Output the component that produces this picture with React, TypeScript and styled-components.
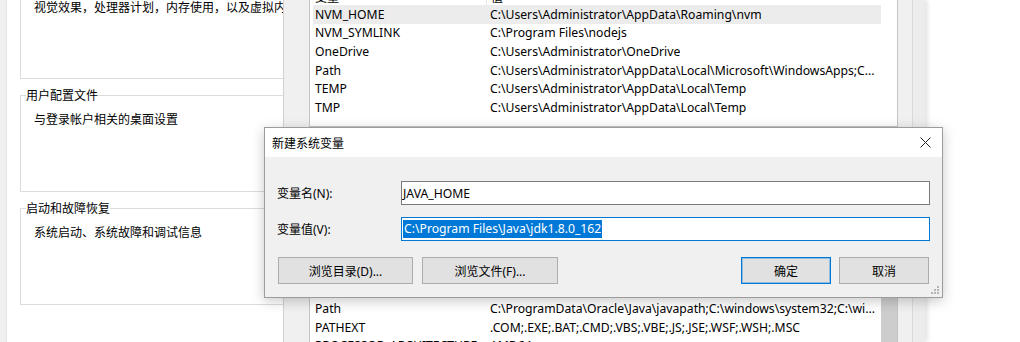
import styled, { createGlobalStyle } from "styled-components";

interface EnvVar {
  name: string;
  value: string;
  selected?: boolean;
}

const userVars: EnvVar[] = [
  { name: "NVM_HOME", value: "C:\\Users\\Administrator\\AppData\\Roaming\\nvm", selected: true },
  { name: "NVM_SYMLINK", value: "C:\\Program Files\\nodejs" },
  { name: "OneDrive", value: "C:\\Users\\Administrator\\OneDrive" },
  { name: "Path", value: "C:\\Users\\Administrator\\AppData\\Local\\Microsoft\\WindowsApps;C..." },
  { name: "TEMP", value: "C:\\Users\\Administrator\\AppData\\Local\\Temp" },
  { name: "TMP", value: "C:\\Users\\Administrator\\AppData\\Local\\Temp" },
];

const systemVars: EnvVar[] = [
  { name: "NUMBER_OF_PROCESSORS", value: "4" },
  { name: "OS", value: "Windows_NT" },
  { name: "Path", value: "C:\\ProgramData\\Oracle\\Java\\javapath;C:\\windows\\system32;C:\\wi..." },
  { name: "PATHEXT", value: ".COM;.EXE;.BAT;.CMD;.VBS;.VBE;.JS;.JSE;.WSF;.WSH;.MSC" },
  { name: "PROCESSOR_ARCHITECTURE", value: "AMD64" },
  { name: "PROCESSOR_IDENTIFIER", value: "Intel64 Family 6 Model 58 Stepping 9, GenuineIntel" },
];

const groups = [
  { title: "性能", text: "视觉效果，处理器计划，内存使用，以及虚拟内存" },
  { title: "用户配置文件", text: "与登录帐户相关的桌面设置" },
  { title: "启动和故障恢复", text: "系统启动、系统故障和调试信息" },
];

const App = () => {
  return (
    <Screen>
      <GlobalStyle />
      <SystemProps>
        <EdgeStrip />
        <TabPage>
          {groups.map((g, idx) => (
            <GroupBox key={g.title} $first={idx === 0}>
              <GroupTitle>{g.title}</GroupTitle>
              <GroupText>{g.text}</GroupText>
            </GroupBox>
          ))}
        </TabPage>
      </SystemProps>

      <EnvWindow>
        <ListColumn>
          <ListBox $top={-20} $height={147}>
            <ListMain>
              <ListHeader>
                <HeaderCell $name>变量</HeaderCell>
                <HeaderCell>值</HeaderCell>
              </ListHeader>
              {userVars.map((v) => (
                <Row key={v.name} $selected={v.selected}>
                  <NameCell>{v.name}</NameCell>
                  <ValueCell>{v.value}</ValueCell>
                </Row>
              ))}
            </ListMain>
            <ScrollTrack />
          </ListBox>
          <ListBox $top={134} $height={120}>
            <ListMain>
              {systemVars.map((v) => (
                <Row key={v.name}>
                  <NameCell>{v.name}</NameCell>
                  <ValueCell>{v.value}</ValueCell>
                </Row>
              ))}
            </ListMain>
            <ScrollTrack $thumb />
          </ListBox>
        </ListColumn>
        <SideRail />
      </EnvWindow>

      <Dialog>
        <TitleBar>
          <Title>新建系统变量</Title>
          <CloseButton>
            <svg width="11" height="11" viewBox="0 0 11 11">
              <path d="M0.5 0.5 L10.5 10.5 M10.5 0.5 L0.5 10.5" stroke="#222" strokeWidth="1" fill="none" />
            </svg>
          </CloseButton>
        </TitleBar>
        <DialogBody>
          <FieldGrid>
            <FieldLabel>变量名(N):</FieldLabel>
            <TextBox>JAVA_HOME</TextBox>
            <FieldLabel>变量值(V):</FieldLabel>
            <TextBox $focused>
              <Selection>C:\Program Files\Java\jdk1.8.0_162</Selection>
            </TextBox>
          </FieldGrid>
          <ButtonRow>
            <ButtonGroup $gap={9}>
              <DialogButton $width={135}>浏览目录(D)...</DialogButton>
              <DialogButton $width={136}>浏览文件(F)...</DialogButton>
            </ButtonGroup>
            <ButtonGroup $gap={8}>
              <DialogButton $width={90} $primary>
                确定
              </DialogButton>
              <DialogButton $width={90}>取消</DialogButton>
            </ButtonGroup>
          </ButtonRow>
          <Grip width="8" height="8" viewBox="0 0 8 8">
            <rect x="6" y="0" width="2" height="2" fill="#b4b4b4" />
            <rect x="3" y="3" width="2" height="2" fill="#b4b4b4" />
            <rect x="6" y="3" width="2" height="2" fill="#b4b4b4" />
            <rect x="0" y="6" width="2" height="2" fill="#b4b4b4" />
            <rect x="3" y="6" width="2" height="2" fill="#b4b4b4" />
            <rect x="6" y="6" width="2" height="2" fill="#b4b4b4" />
          </Grip>
        </DialogBody>
      </Dialog>
    </Screen>
  );
};

export default App;

const GlobalStyle = createGlobalStyle`
  html, body {
    margin: 0;
    padding: 0;
    background: #fff;
  }
  body {
    font-family: "Noto Sans", "Noto Sans CJK SC", sans-serif;
    font-size: 12px;
    color: #000;
  }
`;
const Screen = styled.div`
  position: relative;
  display: flex;
  width: 1020px;
  height: 342px;
  overflow: hidden;
  background: #fff;
`;
const SystemProps = styled.div`
  display: flex;
  flex: none;
  width: 283px;
  overflow: hidden;
`;
const EdgeStrip = styled.div`
  flex: none;
  width: 6px;
  background: #f0f0f0;
  border-right: 1px solid #e3e3e3;
`;
const TabPage = styled.div`
  display: flex;
  flex-direction: column;
  gap: 8px;
  margin-top: -26px;
  padding-left: 13px;
`;
const GroupBox = styled.fieldset<{ $first?: boolean }>`
  box-sizing: border-box;
  flex: none;
  width: 300px;
  height: 105px;
  min-width: 0;
  margin: 0;
  padding: ${(p) => (p.$first ? "9px" : "8px")} 0 0 5px;
  border: 1px solid #dcdcdc;
`;
const GroupTitle = styled.legend`
  padding: 0;
  line-height: 16px;
  font-family: "Noto Sans CJK SC", sans-serif;
  font-size: 12px;
`;
const GroupText = styled.div`
  padding-left: 8px;
  line-height: 16px;
  white-space: nowrap;
  font-family: "Noto Sans CJK SC", sans-serif;
`;
const EnvWindow = styled.div`
  display: flex;
  flex: none;
  box-sizing: border-box;
  width: 642px;
  padding-left: 25px;
  background: #f0f0f0;
  border-left: 1px solid #d2d2d2;
  box-shadow: 3px 0 4px rgba(0, 0, 0, 0.1);
`;
const ListColumn = styled.div`
  display: flex;
  flex: none;
  flex-direction: column;
  width: 589px;
`;
const ListBox = styled.div<{ $top: number; $height: number }>`
  display: flex;
  flex: none;
  box-sizing: border-box;
  height: ${(p) => p.$height}px;
  margin-top: ${(p) => p.$top}px;
  background: #fff;
  border: 1px solid #c4c4c4;
  overflow: hidden;
`;
const ListMain = styled.div`
  display: flex;
  flex: 1;
  flex-direction: column;
  min-width: 0;
`;
const ListHeader = styled.div`
  display: flex;
  box-sizing: border-box;
  height: 24px;
  padding-top: 6px;
  align-items: center;
  font-family: "Noto Sans CJK SC", sans-serif;
`;
const HeaderCell = styled.div<{ $name?: boolean }>`
  box-sizing: border-box;
  width: ${(p) => (p.$name ? "177px" : "auto")};
  padding-left: ${(p) => (p.$name ? "5px" : "4px")};
  border-right: ${(p) => (p.$name ? "1px solid #e5e5e5" : "none")};
`;
const Row = styled.div<{ $selected?: boolean }>`
  display: flex;
  align-items: center;
  height: 18.6px;
  margin-left: 3px;
  background: ${(p) => (p.$selected ? "#ececec" : "transparent")};
  font-size: 12.2px;
  white-space: nowrap;
`;
const NameCell = styled.div`
  box-sizing: border-box;
  flex: none;
  width: 177px;
  padding-left: 2px;
`;
const ValueCell = styled.div`
  overflow: hidden;
`;
const ScrollTrack = styled.div<{ $thumb?: boolean }>`
  flex: none;
  width: 16px;
  background: ${(p) => (p.$thumb ? "#cdcdcd" : "#fff")};
`;
const SideRail = styled.div`
  flex: none;
  width: 12px;
  margin-left: 14px;
  border-left: 1px solid #d9d9d9;
  background: #ececec;
`;
const Dialog = styled.div`
  position: absolute;
  left: 264px;
  top: 127px;
  display: flex;
  flex-direction: column;
  box-sizing: border-box;
  width: 679px;
  height: 171px;
  background: #f0f0f0;
  border: 1px solid #9c9c9c;
  box-shadow: 0 3px 12px rgba(0, 0, 0, 0.22);
`;
const TitleBar = styled.div`
  display: flex;
  align-items: center;
  justify-content: space-between;
  height: 29px;
  padding-left: 7px;
  background: #fff;
`;
const Title = styled.span`
  font-family: "Noto Sans CJK SC", sans-serif;
  font-size: 12px;
`;
const CloseButton = styled.div`
  display: flex;
  align-items: center;
  justify-content: center;
  width: 34px;
  height: 29px;
`;
const DialogBody = styled.div`
  position: relative;
  display: flex;
  flex: 1;
  flex-direction: column;
  padding: 24px 12px 13px 12px;
`;
const FieldGrid = styled.div`
  display: grid;
  grid-template-columns: 124px 1fr;
  row-gap: 12px;
  align-items: center;
`;
const FieldLabel = styled.span`
  font-size: 12px;
`;
const TextBox = styled.div<{ $focused?: boolean }>`
  display: flex;
  align-items: center;
  box-sizing: border-box;
  height: 24px;
  padding: 0 1px;
  background: #fff;
  border: 1px solid ${(p) => (p.$focused ? "#0078d7" : "#7a7a7a")};
  font-size: 12.2px;
  white-space: nowrap;
`;
const Selection = styled.span`
  line-height: 18px;
  padding: 0 1px;
  background: #0078d7;
  color: #fff;
`;
const ButtonRow = styled.div`
  display: flex;
  justify-content: space-between;
  margin: 16px 1px 0;
`;
const ButtonGroup = styled.div<{ $gap: number }>`
  display: flex;
  gap: ${(p) => p.$gap}px;
`;
const DialogButton = styled.div<{ $width: number; $primary?: boolean }>`
  display: flex;
  align-items: center;
  justify-content: center;
  box-sizing: border-box;
  width: ${(p) => p.$width}px;
  height: 27px;
  background: #e1e1e1;
  border: 1px solid ${(p) => (p.$primary ? "#0078d7" : "#adadad")};
  box-shadow: ${(p) => (p.$primary ? "inset 0 0 0 1px rgba(0, 120, 215, 0.35)" : "none")};
  font-size: 12px;
`;
const Grip = styled.svg`
  position: absolute;
  right: 3px;
  bottom: 3px;
`;
